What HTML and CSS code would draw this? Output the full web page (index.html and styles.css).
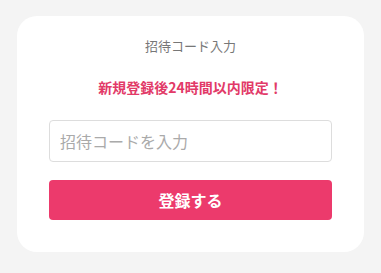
FILE: index.html
```html
<!DOCTYPE html>
<html lang="ja">
<head>
  <meta charset="UTF-8" />
  <meta name="viewport" content="width=device-width, initial-scale=1.0" />
  <title>招待コード入力</title>
  <link rel="stylesheet" href="styles.css">
</head>
<body>
  <div class="card">
    <h2 class="title">招待コード入力</h2>
    <p class="notice">新規登録後24時間以内限定！</p>
    <input class="code-input" type="text" placeholder="招待コードを入力" />
    <button class="submit">登録する</button>
  </div>
</body>
</html>
```

FILE: styles.css
```css
body {
  margin: 0;
  padding: 16px 17px;
  background: #f4f4f4;
  font-family: "Noto Sans CJK JP", "Noto Sans", sans-serif;
}

.card {
  width: 347px;
  height: 236px;
  box-sizing: border-box;
  background: #fff;
  border-radius: 20px;
  padding: 20px 32px 32px;
  display: flex;
  flex-direction: column;
}

.title {
  margin: 0;
  font-size: 13px;
  font-weight: normal;
  line-height: 20px;
  color: #777;
  text-align: center;
}

.notice {
  margin: 21px 0 0;
  font-size: 14px;
  font-weight: bold;
  line-height: 20px;
  color: #e23a68;
  text-align: center;
}

.code-input {
  margin-top: 23px;
  height: 42px;
  box-sizing: border-box;
  border: 1px solid #ddd;
  border-radius: 4px;
  padding: 0 10px;
  font-family: inherit;
  font-size: 16px;
  color: #333;
  outline: none;
}

.code-input::placeholder {
  color: #aaa;
}

.submit {
  margin-top: 18px;
  height: 40px;
  border: none;
  border-radius: 4px;
  background: #ec3a6c;
  color: #fff;
  font-family: inherit;
  font-size: 16px;
  font-weight: bold;
}
```
